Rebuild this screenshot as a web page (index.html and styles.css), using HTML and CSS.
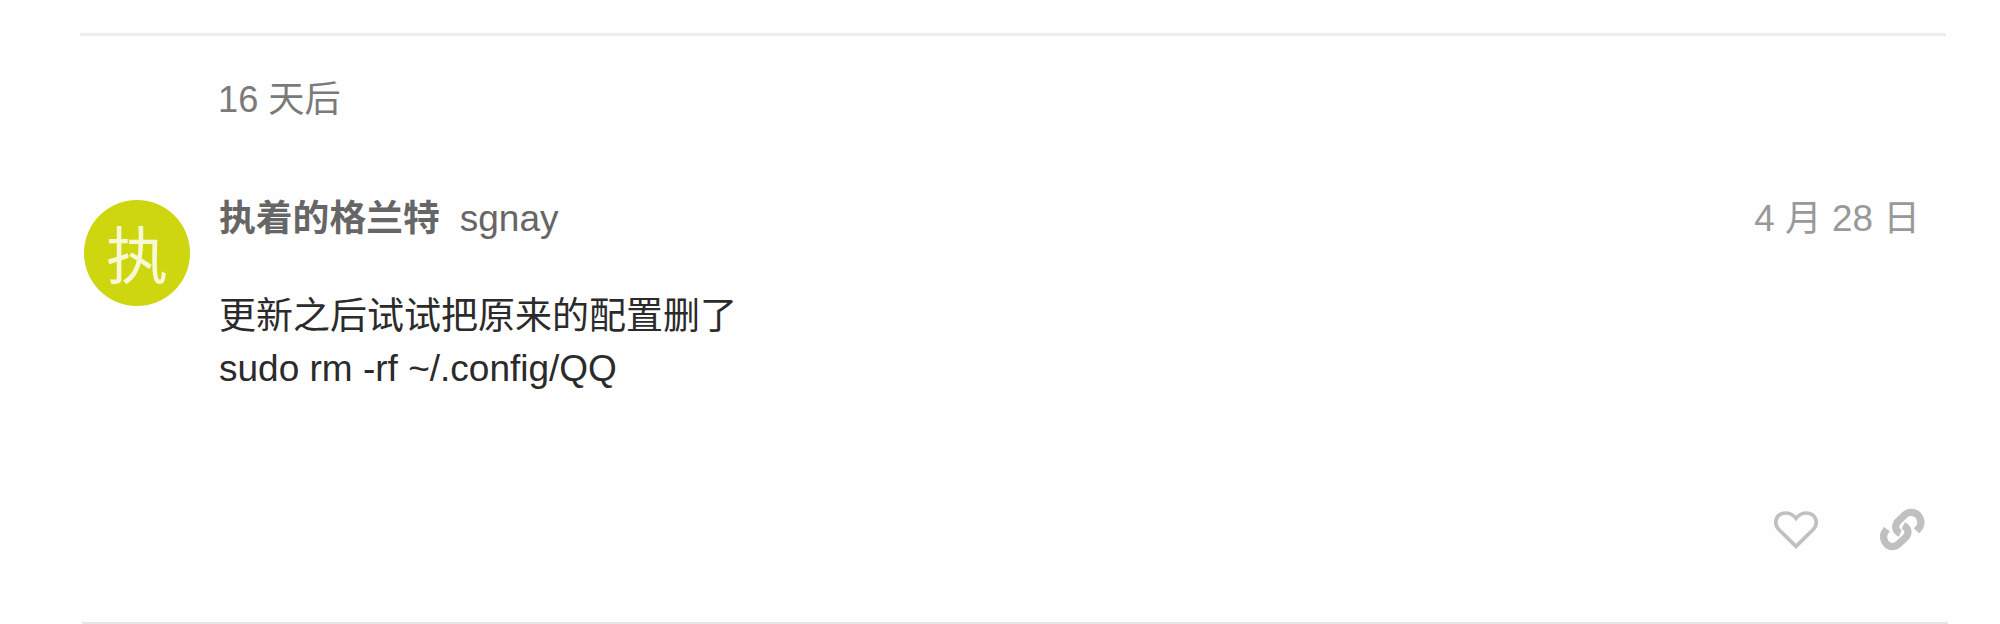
FILE: index.html
```html
<!DOCTYPE html>
<html lang="zh-CN">
<head>
<meta charset="utf-8">
<title>更新之后试试把原来的配置删了</title>
<link rel="stylesheet" href="styles.css">
</head>
<body>
<main class="stream">
  <div class="gap">16 天后</div>
  <article class="post">
    <div class="avatar">执</div>
    <div class="body">
      <header class="meta">
        <span class="name">执着的格兰特</span>
        <span class="user">sgnay</span>
        <time class="date">4 月 28 日</time>
      </header>
      <p class="text">更新之后试试把原来的配置删了<br>sudo rm -rf ~/.config/QQ</p>
      <div class="actions">
        <svg class="heart" viewBox="0 0 132 114"><path d="M66 106 16 57C-4 37 6 6 36 6c14 0 22 6 30 16C74 12 82 6 96 6c30 0 40 31 20 51Z"/></svg>
        <svg class="link" viewBox="28 22 134 130"><path d="M49 86 46 90C29 111 46 141 68 139Q78 138 86 130L106 111C117 100 116 83 99 75"/><path d="M139 91 145 85C161 66 150 35 122 35Q112 35 104 42L83 62C72 74 73 92 90 99"/></svg>
      </div>
    </div>
  </article>
</main>
</body>
</html>
```
FILE: styles.css
```css
* { box-sizing: border-box; }
body {
  margin: 0;
  height: 624px;
  overflow: hidden;
  background: #fefefe;
  font: 37px/52px "Liberation Sans", "Noto Sans CJK SC", sans-serif;
}
.stream { margin: 33px 54px 0 80px; border-top: 3px solid #ededed; }
.gap { padding: 38px 0 0 138px; color: #7a7a7a; font-size: 36.2px; }
.post {
  display: flex;
  margin: 67px -2px 0 2px;
  height: 431px;
  border-bottom: 2px solid #e6e6e6;
}
.avatar {
  width: 106px;
  height: 106px;
  margin: 7px 0 0 2px;
  border-radius: 50%;
  background: #cdd60f;
  color: #f8f9d4;
  font: 400 62px/104px "Noto Sans CJK SC", sans-serif;
  text-align: center;
}
.body { flex: 1; margin-left: 29px; display: flex; flex-direction: column; }
.meta { display: flex; color: #666; }
.name { font-weight: 700; font-size: 36.8px; }
.user { margin-left: 20px; }
.date { margin-left: auto; margin-right: 28px; color: #999; font-size: 36.8px; }
.text { margin: 46px 0 0; color: #2b2b2b; line-height: 52px; }
.actions {
  display: flex;
  align-items: center;
  justify-content: flex-end;
  gap: 62px;
  margin: 113px 24px 0 0;
}
.heart, .link { fill: none; stroke: #c0c0c0; overflow: visible; }
.heart { width: 44px; height: 38px; stroke-width: 11; }
.link { width: 44px; height: 43px; stroke-width: 22; }
```
